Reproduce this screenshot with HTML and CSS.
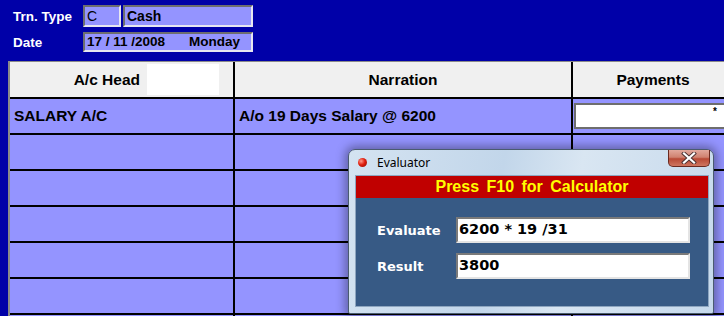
FILE: index.html
```html
<!DOCTYPE html>
<html lang="en">
<head>
    <meta charset="UTF-8">
    <meta name="viewport" content="width=device-width, initial-scale=1.0">
    <title>Voucher Entry</title>
    <link rel="stylesheet" href="styles.css">
</head>
<body>
    <div class="screen">
        <div class="top">
            <div class="top-row">
                <span class="top-label">Trn. Type</span>
                <span class="field code">C</span>
                <span class="field name">Cash</span>
            </div>
            <div class="top-row">
                <span class="top-label">Date</span>
                <span class="field date"><span>17 / 11 /2008</span><span>Monday</span></span>
            </div>
        </div>

        <div class="grid">
            <div class="head head-ac">A/c Head <span class="head-box"></span></div>
            <div class="head">Narration</div>
            <div class="head">Payments</div>

            <div class="cell">SALARY A/C</div>
            <div class="cell">A/o 19 Days Salary @ 6200</div>
            <div class="cell cell-input"><span class="pay-input">*</span></div>

            <div class="cell"></div><div class="cell"></div><div class="cell"></div>
            <div class="cell"></div><div class="cell"></div><div class="cell"></div>
            <div class="cell"></div><div class="cell"></div><div class="cell"></div>
            <div class="cell"></div><div class="cell"></div><div class="cell"></div>
            <div class="cell"></div><div class="cell"></div><div class="cell"></div>
            <div class="cell"></div><div class="cell"></div><div class="cell"></div>
        </div>

        <div class="evaluator">
            <div class="title-bar">
                <span class="orb"></span>
                <span class="title">Evaluator</span>
                <span class="close-btn">
                    <svg viewBox="0 0 16 12" width="16" height="12">
                        <path d="M3 1.5 L13 10.5 M13 1.5 L3 10.5" stroke="#4a3030" stroke-width="4" stroke-linecap="square"></path>
                        <path d="M3 1.5 L13 10.5 M13 1.5 L3 10.5" stroke="#fff" stroke-width="2.2" stroke-linecap="square"></path>
                    </svg>
                </span>
            </div>
            <div class="client">
                <div class="banner">Press F10 for Calculator</div>
                <div class="eval-body">
                    <div class="eval-row">
                        <span class="eval-label">Evaluate</span>
                        <span class="eval-input">6200 * 19 /31</span>
                    </div>
                    <div class="eval-row">
                        <span class="eval-label">Result</span>
                        <span class="eval-input">3800</span>
                    </div>
                </div>
            </div>
        </div>
    </div>
</body>
</html>
```

FILE: styles.css
```css
body {
    margin: 0;
    background-color: #0000a8;
    font-family: "Liberation Sans", Arial, sans-serif;
    overflow: hidden;
}

.screen {
    position: relative;
    width: 724px;
    height: 316px;
    overflow: hidden;
}

/* header block */
.top {
    height: 56px;
    padding: 5px 0 0 13px;
    display: flex;
    flex-direction: column;
    gap: 5px;
}

.top-row {
    display: flex;
    align-items: center;
    gap: 2px;
}

.top-label {
    width: 68px;
    color: #fff;
    font-size: 13.5px;
    font-weight: bold;
}

.field {
    box-sizing: border-box;
    height: 22px;
    padding: 1px 0 0 2px;
    background-color: #9494ff;
    border: 2px solid;
    border-color: #6e6e6e #e6e6f0 #e6e6f0 #6e6e6e;
    color: #000;
    font-size: 14px;
    font-weight: bold;
}

.field.code {
    width: 38px;
    font-weight: normal;
}

.field.name {
    width: 130px;
}

.field.date {
    width: 170px;
    height: 20px;
    padding-top: 0;
    display: flex;
    gap: 24px;
    font-size: 13.5px;
}

/* voucher grid */
.grid {
    margin-left: 8px;
    border-top: 1px solid #8a8a8a;
    border-left: 2px solid #8a8a8a;
    background-color: #000;
    display: grid;
    grid-template-columns: 223px 336px 160px;
    grid-template-rows: 35px repeat(7, 34px);
    gap: 2px;
}

.head {
    background-color: #f0f0f0;
    display: flex;
    align-items: center;
    justify-content: center;
    font-size: 15.5px;
    font-weight: bold;
}

.head-ac {
    justify-content: flex-end;
    padding-right: 14px;
}

.head-box {
    width: 72px;
    height: 31px;
    margin-left: 7px;
    background-color: #fff;
}

.cell {
    background-color: #9494ff;
    display: flex;
    align-items: center;
    padding-left: 4px;
    font-size: 15.5px;
    font-weight: bold;
}

.cell-input {
    padding-left: 1px;
    align-items: flex-start;
}

.pay-input {
    box-sizing: border-box;
    width: 160px;
    height: 26px;
    margin-top: 4px;
    padding: 0 14px 0 0;
    background-color: #fff;
    border: 2px solid #6e6e6e;
    text-align: right;
    font-size: 10px;
    line-height: 14px;
}

/* evaluator window */
.evaluator {
    position: absolute;
    left: 348px;
    top: 149px;
    width: 366px;
    height: 165px;
    box-sizing: border-box;
    border: 1px solid #4a5b70;
    border-radius: 7px 7px 2px 2px;
    background: linear-gradient(100deg, #d4e3f1 0%, #c2d6ea 40%, #d9e6f2 60%, #c6d9ec 100%);
    box-shadow: 0 0 10px 3px rgba(0, 0, 0, 0.35);
    display: flex;
    flex-direction: column;
}

.title-bar {
    height: 25px;
    display: flex;
    align-items: center;
    padding-left: 9px;
}

.orb {
    width: 9px;
    height: 9px;
    border-radius: 50%;
    background: radial-gradient(circle at 35% 35%, #ff9a8a 0%, #e02010 45%, #8a0a00 100%);
}

.title {
    margin-left: 10px;
    font-family: "Noto Sans", sans-serif;
    font-size: 12px;
    color: #000;
}

.close-btn {
    margin-left: auto;
    margin-right: 3px;
    align-self: flex-start;
    width: 42px;
    height: 17px;
    box-sizing: border-box;
    border: 1px solid #6a2a20;
    border-top: none;
    border-radius: 0 0 5px 5px;
    background: linear-gradient(#e2a89c 0%, #d08270 45%, #b84a36 55%, #cf7660 100%);
    display: flex;
    align-items: center;
    justify-content: center;
}

.client {
    flex: 1;
    margin: 0 4px 6px 6px;
    border: 1px solid #8ea6c0;
    display: flex;
    flex-direction: column;
}

.banner {
    height: 22px;
    background-color: #c00000;
    color: #ffff00;
    font-size: 16px;
    font-weight: bold;
    word-spacing: 3px;
    text-align: center;
    line-height: 22px;
}

.eval-body {
    flex: 1;
    background-color: #375a85;
    padding: 19px 0 0 21px;
    display: flex;
    flex-direction: column;
    gap: 10px;
}

.eval-row {
    display: flex;
    align-items: center;
}

.eval-label {
    width: 79px;
    color: #fff;
    font-family: "DejaVu Sans", sans-serif;
    font-size: 13px;
    font-weight: bold;
}

.eval-input {
    box-sizing: border-box;
    width: 234px;
    height: 26px;
    padding-left: 1px;
    background-color: #fff;
    border: 2px solid;
    border-color: #7a7a7a #e4e4e4 #e4e4e4 #7a7a7a;
    font-family: "DejaVu Sans", sans-serif;
    font-size: 14.5px;
    font-weight: bold;
    line-height: 21px;
}
```
